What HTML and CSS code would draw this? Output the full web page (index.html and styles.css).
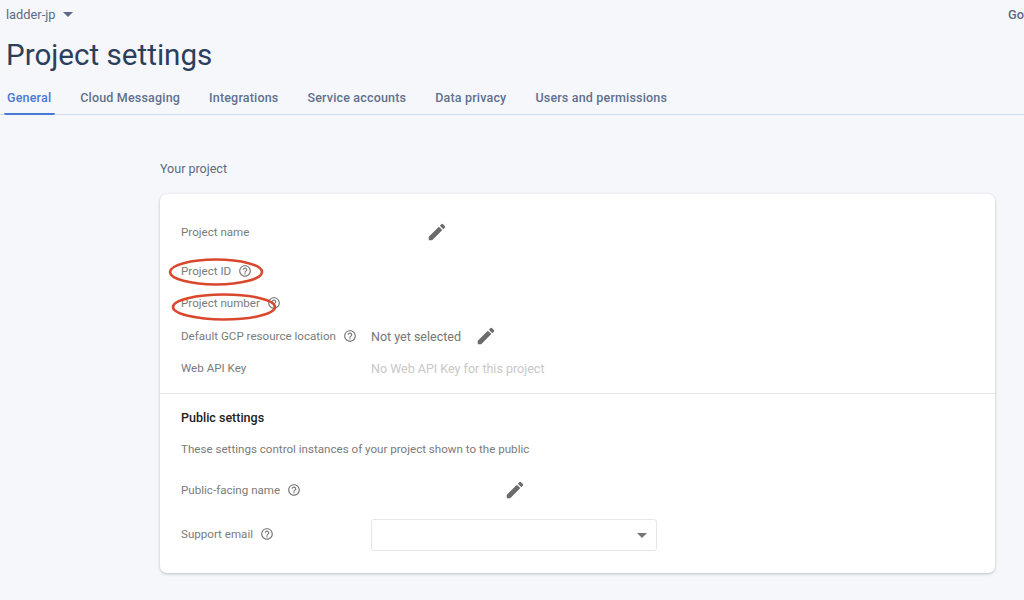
FILE: index.html
```html
<!DOCTYPE html>
<html lang="en">
<head>
<meta charset="utf-8">
<title>Project settings</title>
<link rel="stylesheet" href="styles.css">
</head>
<body>
<svg class="defs" width="0" height="0" aria-hidden="true">
  <symbol id="pencil" viewBox="0 0 24 24"><path d="M3 17.25V21h3.75L17.81 9.94l-3.75-3.75L3 17.25zM20.71 7.04a1 1 0 0 0 0-1.41l-2.34-2.34a1 1 0 0 0-1.41 0l-1.83 1.83 3.75 3.75 1.83-1.83z"/></symbol>
  <symbol id="help" viewBox="0 0 24 24"><path d="M11 18h2v-2h-2v2zm1-16C6.48 2 2 6.48 2 12s4.48 10 10 10 10-4.48 10-10S17.52 2 12 2zm0 18c-4.41 0-8-3.59-8-8s3.59-8 8-8 8 3.59 8 8-3.59 8-8 8zm0-14c-2.21 0-4 1.79-4 4h2c0-1.1.9-2 2-2s2 .9 2 2c0 2-3 1.75-3 5h2c0-2.25 3-2.5 3-5 0-2.21-1.79-4-4-4z"/></symbol>
</svg>
<header class="top">
  <div class="project-picker"><span>ladder-jp</span><i class="caret caret-top"></i></div>
  <span class="go">Go</span>
</header>
<h1 class="title">Project settings</h1>
<nav class="tabs">
  <a class="tab active">General</a>
  <a class="tab">Cloud Messaging</a>
  <a class="tab">Integrations</a>
  <a class="tab">Service accounts</a>
  <a class="tab">Data privacy</a>
  <a class="tab">Users and permissions</a>
</nav>
<main class="content">
  <h2 class="section-title">Your project</h2>
  <section class="card">
    <div class="card-top">
      <div class="row row-name">
        <span class="label">Project name</span>
        <svg class="edit edit-name"><use href="#pencil"/></svg>
      </div>
      <div class="row row-id">
        <span class="label">Project ID<svg class="help"><use href="#help"/></svg></span>
      </div>
      <div class="row row-number">
        <span class="label">Project number<svg class="help"><use href="#help"/></svg></span>
      </div>
      <div class="row row-location">
        <span class="label">Default GCP resource location<svg class="help"><use href="#help"/></svg></span>
        <span class="value">Not yet selected</span>
        <svg class="edit"><use href="#pencil"/></svg>
      </div>
      <div class="row row-key">
        <span class="label">Web API Key</span>
        <span class="value muted">No Web API Key for this project</span>
      </div>
    </div>
    <div class="card-bottom">
      <h3 class="sub-title">Public settings</h3>
      <p class="desc">These settings control instances of your project shown to the public</p>
      <div class="row row-public">
        <span class="label">Public-facing name<svg class="help"><use href="#help"/></svg></span>
        <svg class="edit edit-public"><use href="#pencil"/></svg>
      </div>
      <div class="row row-email">
        <span class="label">Support email<svg class="help"><use href="#help"/></svg></span>
        <div class="select"><i class="caret"></i></div>
      </div>
    </div>
  </section>
</main>
<svg class="ring ring-id" viewBox="0 0 96 30"><ellipse cx="48" cy="15" rx="46" ry="12.5"/></svg>
<svg class="ring ring-number" viewBox="0 0 106 30"><ellipse cx="53" cy="15" rx="51" ry="12.5"/></svg>
</body>
</html>
```
FILE: styles.css
```css
* { box-sizing: border-box; }
html, body { height: 100%; }
body {
  margin: 0;
  overflow: hidden;
  background: #f5f7fa;
  font-family: Roboto, "Liberation Sans", sans-serif;
  position: relative;
}
.defs { position: absolute; }
.top {
  display: flex;
  justify-content: space-between;
  align-items: center;
  height: 28px;
  padding-left: 6px;
  color: #5a6b85;
  font-size: 12.8px;
}
.project-picker { display: flex; align-items: center; gap: 8px; }
.go { font-weight: 500; width: 16px; white-space: nowrap; overflow: hidden; }
.caret {
  display: block;
  width: 0;
  height: 0;
  border-left: 5px solid transparent;
  border-right: 5px solid transparent;
  border-top: 5px solid #757575;
}
.caret-top { border-top-color: #5a6b85; }
.title {
  margin: 0;
  padding: 1px 0 0 6px;
  height: 52px;
  line-height: 52px;
  font-size: 29.6px;
  font-weight: 400;
  color: #2b3f5c;
}
.tabs {
  display: flex;
  gap: 23px;
  height: 35px;
  padding-left: 4px;
  border-bottom: 1px solid #cfdcec;
}
.tab {
  height: 35px;
  padding: 10px 3px 0;
  font-size: 12.5px;
  line-height: 15px;
  font-weight: 500;
  letter-spacing: .18px;
  color: #5f7090;
}
.tab.active {
  padding-right: 4px;
  margin-right: -1px;
  color: #4a78d6;
  border-bottom: 2px solid #4a78d6;
  border-radius: 0 0 2px 2px;
}
.content { padding: 46px 29px 0 160px; }
.section-title {
  margin: 0 0 17px;
  font-size: 12.5px;
  line-height: 16px;
  font-weight: 400;
  color: #5a6b85;
}
.card {
  height: 379px;
  background: #fff;
  border-radius: 7px;
  box-shadow: 0 1px 3px rgba(60, 64, 67, .3);
}
.card-top {
  height: 200px;
  padding: 22px 21px 0;
  border-bottom: 1px solid #e6e6e6;
}
.card-bottom { padding: 14px 21px 0; }
.row { display: flex; align-items: center; }
.row-name { height: 32px; margin-bottom: 7px; }
.row-id { height: 32px; }
.row-number { height: 32px; margin-bottom: 1px; }
.row-location { height: 32px; }
.row-key { height: 32px; }
.label {
  display: flex;
  align-items: center;
  width: 190px;
  flex: none;
  font-size: 11.6px;
  color: #7b7b7b;
}
.help { width: 14px; height: 14px; margin-left: 7px; fill: #757575; }
.value { font-size: 12.5px; color: #757575; }
.muted { color: #c8c8c8; }
.edit { width: 22px; height: 22px; margin-left: 14px; fill: #6b6b6b; }
.edit-name { margin-left: 55px; }
.edit-public { margin-left: 133px; }
.sub-title {
  margin: 0 0 12px;
  font-size: 12.5px;
  line-height: 20px;
  font-weight: 500;
  color: #212121;
}
.desc { margin: 0 0 16px; font-size: 11.6px; line-height: 18px; color: #7b7b7b; }
.row-public { height: 32px; margin-bottom: 13px; }
.row-email { height: 32px; align-items: flex-start; }
.row-email .label { height: 30px; }
.select {
  display: flex;
  align-items: center;
  justify-content: flex-end;
  width: 286px;
  height: 32px;
  padding-right: 9px;
  border: 1px solid #e6e6e6;
  border-radius: 3px;
}
.ring { position: absolute; fill: none; stroke: #d9482c; stroke-width: 2.6; }
.ring-id { left: 168px; top: 257px; width: 96px; height: 30px; }
.ring-number { left: 171px; top: 292px; width: 106px; height: 30px; }
```
